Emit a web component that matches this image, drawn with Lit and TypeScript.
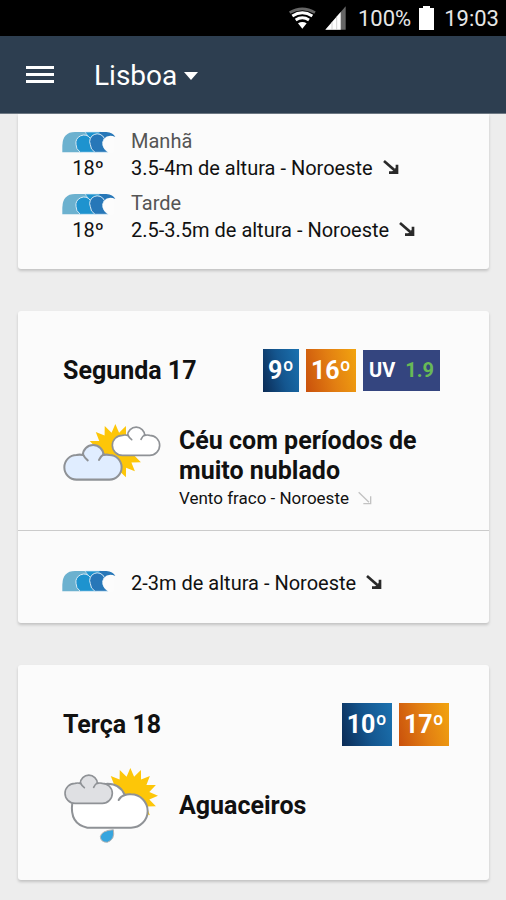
import { LitElement, html, css, svg, nothing } from "lit";
import { customElement, property } from "lit/decorators.js";

const CLOUD =
  "M30 82 H112 A30 30 0 0 0 112 22 Q105 20 97 22 A25 24 0 0 0 46 22 Q38 20 30 22 A30 30 0 0 0 30 82 Z";
const CLOUD_FOLDS = "M46 20 Q50 29 58 35 M98 20 Q90 25 86 34";

/** Sixteen-pointed sun outline around (cx, cy). */
function sunPoints(cx: number, cy: number): string {
  const points: string[] = [];
  for (let i = 0; i < 32; i++) {
    const radius = i % 2 ? 58 : 83;
    const angle = (i * Math.PI) / 16 - Math.PI / 2;
    points.push(
      `${(cx + radius * Math.cos(angle)).toFixed(1)},${(cy + radius * Math.sin(angle)).toFixed(1)}`
    );
  }
  return points.join(" ");
}

const cloud = (transform: string, fill: string) => svg`
  <g transform=${transform} stroke="#8f9296" stroke-width="5" stroke-linecap="round">
    <path d=${CLOUD} fill=${fill}></path>
    <path d=${CLOUD_FOLDS} fill="none"></path>
  </g>`;

@customElement("weather-icon")
export class WeatherIcon extends LitElement {
  @property() kind = "";

  static styles = css`
    :host {
      display: block;
    }
    .icon {
      display: block;
    }
  `;

  render() {
    if (this.kind === "showers") {
      return html`<svg class="icon" width="98" height="76" viewBox="39 24 294 228" role="img" aria-label="Aguaceiros">
        <polygon points=${sunPoints(241, 107)} fill="#fdc608"></polygon>
        <path
          d="M112 203 H243 A50 50 0 0 0 243 103 Q233 102 224 105 Q211 71 172 71 L100 90 L67 128 Q58 192 112 203 Z"
          fill="#fff" stroke="#8f9296" stroke-width="6"></path>
        <path d="M226 104 Q212 108 206 120" fill="none" stroke="#8f9296" stroke-width="6" stroke-linecap="round"></path>
        ${cloud("translate(45 48)", "#dfe0e3")}
        <path d="M190 209 Q196 238 172 247 Q152 247 151 230 Q154 212 190 209 Z" fill="#37a5de" stroke="#b5b5b5" stroke-width="3"></path>
      </svg>`;
    }
    return html`<svg class="icon" width="98" height="58" viewBox="-1 0 294 174" role="img" aria-label="Céu com períodos de muito nublado">
      <polygon points=${sunPoints(156, 83)} fill="#fdc608"></polygon>
      ${cloud("translate(147 12)", "#fff")}
      ${cloud("translate(3 66) scale(1.21 1.23)", "#e0edff")}
    </svg>`;
  }
}

@customElement("wave-icon")
export class WaveIcon extends LitElement {
  static styles = css`
    :host {
      display: block;
    }
    .icon {
      display: block;
    }
  `;

  render() {
    return html`<svg class="icon" width="56" height="22" viewBox="-3 0 168 66" aria-hidden="true">
      <path d="M4 64 V44 Q5 3 42 3 H78 L92 22 L64 64 Z" fill="#6cb1cf"></path>
      <path d="M72 3 H120 L130 22 H86 Z" fill="#1e93cf" stroke="#d5e8f4" stroke-width="2"></path>
      <path d="M58 64 Q44 54 45 40 A24 23 0 0 1 88 22 L108 20 L106 64 Z" fill="#1e93cf" stroke="#d5e8f4" stroke-width="3"></path>
      <path d="M114 3 H136 Q156 4 163 18 Q142 8 128 24 Z" fill="#2777b8"></path>
      <path d="M102 64 Q88 55 88 41 A23 23 0 0 1 130 22 Q116 44 141 64 Z" fill="#2777b8" stroke="#d5e8f4" stroke-width="3"></path>
      <path d="M144 65 Q122 52 126 34 Q135 15 158 18 V65 Z" fill="#fcfcfc"></path>
    </svg>`;
  }
}

@customElement("wind-arrow")
export class WindArrow extends LitElement {
  @property({ type: Boolean }) light = false;

  static styles = css`
    :host {
      display: inline-block;
    }
    .icon {
      display: block;
    }
  `;

  render() {
    return html`<svg class="icon" width="16" height="16" viewBox="0 0 48 48" fill="none" aria-hidden="true">
      ${this.light
        ? svg`<path d="M5 4 L36 34 M19 38 H41 V16" stroke="#c2c2c2" stroke-width="4"></path>`
        : svg`<path d="M3 3 L34 30" stroke="#2a2a2a" stroke-width="8"></path>
            <path d="M18 38 H42 V14" stroke="#2a2a2a" stroke-width="8"></path>
            <path d="M24 38 L42 20 V38 Z" fill="#2a2a2a"></path>`}
    </svg>`;
  }
}

interface Swell {
  period?: string;
  water?: string;
  text: string;
}

interface Day {
  title?: string;
  min?: string;
  max?: string;
  uv?: string;
  kind?: string;
  summary?: string;
  wind?: string;
  swells: Swell[];
}

const DAYS: Day[] = [
  {
    swells: [
      { period: "Manhã", water: "18º", text: "3.5-4m de altura - Noroeste" },
      { period: "Tarde", water: "18º", text: "2.5-3.5m de altura - Noroeste" },
    ],
  },
  {
    title: "Segunda 17",
    min: "9º",
    max: "16º",
    uv: "1.9",
    kind: "cloudy",
    summary: "Céu com períodos de muito nublado",
    wind: "Vento fraco - Noroeste",
    swells: [{ text: "2-3m de altura - Noroeste" }],
  },
  {
    title: "Terça 18",
    min: "10º",
    max: "17º",
    kind: "showers",
    summary: "Aguaceiros",
    swells: [],
  },
];

@customElement("app-root")
export class AppRoot extends LitElement {
  static styles = css`
    :host {
      display: block;
      min-height: 100vh;
      background: #ededed;
      color: #111;
      font-family: Roboto, "Liberation Sans", sans-serif;
      font-size: 20px;
    }
    .status {
      display: flex;
      align-items: center;
      justify-content: flex-end;
      height: 36px;
      padding-right: 7px;
      background: #000;
      color: #e6e6e6;
      font-size: 22px;
    }
    .wifi {
      margin-right: 9px;
    }
    .signal {
      margin-right: 12px;
    }
    .battery {
      margin: 0 10px 0 8px;
    }
    .bar {
      display: flex;
      align-items: center;
      gap: 36px;
      height: 78px;
      padding: 0 22px;
      box-sizing: border-box;
      background: #2d3e50;
      border-bottom: 1px solid #6d7883;
    }
    .menu {
      display: block;
      padding: 4px;
      border: 0;
      background: none;
    }
    .menu svg,
    .caret {
      display: block;
    }
    .city {
      display: flex;
      align-items: center;
      gap: 6px;
      padding-top: 3px;
    }
    .city-select {
      appearance: none;
      padding: 0;
      border: 0;
      background: none;
      color: #fff;
      font: 28px/36px Roboto, "Liberation Sans", sans-serif;
    }
    .list {
      display: flex;
      flex-direction: column;
      gap: 42px;
      padding: 0 17px 20px 18px;
    }
    .card {
      background: #fbfbfb;
      border-radius: 3px;
      box-shadow: 0 2px 3px rgba(0, 0, 0, 0.18);
    }
    .card:first-child {
      border-radius: 0 0 3px 3px;
    }
    .forecast {
      padding: 38px 40px 20px 45px;
    }
    .head {
      display: flex;
      align-items: center;
      justify-content: space-between;
      height: 43px;
    }
    .title,
    .summary {
      margin: 0;
      font-size: 25px;
      line-height: 30px;
      font-weight: 700;
    }
    .badges {
      display: flex;
      align-items: center;
      gap: 7px;
    }
    .temp {
      padding: 0 5px;
      color: #fff;
      font-size: 25px;
      line-height: 43px;
      font-weight: 700;
    }
    .min {
      background: linear-gradient(75deg, #0b2b55, #14568f 50%, #1b72b0);
    }
    .max {
      background: linear-gradient(75deg, #c9500c, #e27e12 50%, #f2a40f);
    }
    .uv {
      display: flex;
      gap: 10px;
      margin-right: 9px;
      padding: 0 6px;
      background: #34457f;
      color: #fff;
      font-size: 20px;
      line-height: 41px;
      font-weight: 700;
    }
    .uv-value {
      color: #68b956;
    }
    .sky {
      display: grid;
      grid-template-columns: 98px 1fr;
      column-gap: 18px;
      align-items: center;
      margin-top: 22px;
    }
    .sky.windy {
      align-items: start;
      margin-top: 32px;
    }
    .windy .words {
      padding-top: 2px;
    }
    .wind {
      margin: 0;
      font-size: 17px;
      line-height: 24px;
    }
    .wind wind-arrow {
      margin-left: 4px;
      vertical-align: -3px;
    }
    .forecast.short {
      padding-bottom: 36px;
    }
    .sea {
      display: flex;
      flex-direction: column;
      gap: 8px;
      padding: 39px 42px 26px;
      border-top: 1px solid #cbcbcb;
    }
    .sea.periods {
      padding: 14px 42px 25px;
      border-top: 0;
    }
    .swell {
      display: grid;
      grid-template-columns: 56px 1fr;
      column-gap: 15px;
      line-height: 27px;
    }
    .periods wave-icon {
      align-self: center;
    }
    .period {
      color: #555;
    }
    .water {
      text-align: center;
    }
    .height wind-arrow {
      margin-left: 10px;
      vertical-align: -1px;
    }
  `;

  private renderSwell(s: Swell) {
    return html`<div class="swell">
      <wave-icon></wave-icon>
      ${s.period ? html`<span class="period">${s.period}</span><span class="water">${s.water}</span>` : nothing}
      <span class="height">${s.text}<wind-arrow></wind-arrow></span>
    </div>`;
  }

  private renderDay(d: Day) {
    return html`<article class="card">
      ${d.title
        ? html`<section class="forecast ${d.wind ? "" : "short"}">
            <div class="head">
              <h2 class="title">${d.title}</h2>
              <div class="badges">
                <span class="temp min">${d.min}</span>
                <span class="temp max">${d.max}</span>
                ${d.uv ? html`<span class="uv"><span>UV</span><span class="uv-value">${d.uv}</span></span>` : nothing}
              </div>
            </div>
            <div class="sky ${d.wind ? "windy" : ""}">
              <weather-icon kind=${d.kind ?? ""}></weather-icon>
              <div class="words">
                <p class="summary">${d.summary}</p>
                ${d.wind ? html`<p class="wind">${d.wind} <wind-arrow light></wind-arrow></p>` : nothing}
              </div>
            </div>
          </section>`
        : nothing}
      ${d.swells.length
        ? html`<section class="sea ${d.title ? "" : "periods"}">${d.swells.map((s) => this.renderSwell(s))}</section>`
        : nothing}
    </article>`;
  }

  render() {
    return html`
      <div class="status">
        <svg class="wifi" width="28" height="22" viewBox="102 20 84 66" fill="none" aria-hidden="true">
          <path d="M107 37 Q145 14 183 37" stroke="#666" stroke-width="8"></path>
          <path d="M115 47 Q145 28 175 47" stroke="#fff" stroke-width="9"></path>
          <path d="M125 59 Q145 46 165 59" stroke="#fff" stroke-width="9"></path>
          <path d="M132 69 Q145 61 158 69 L145 85 Z" fill="#fff"></path>
        </svg>
        <svg class="signal" width="21" height="24" viewBox="211 15 63 72" aria-hidden="true">
          <path d="M212 86 L273 16 V86 Z" fill="#666"></path>
          <path d="M212 86 L258 33 V86 Z" fill="#fff"></path>
          <path d="M232 63 V86 M246 47 V86" stroke="#bbb" stroke-width="2"></path>
        </svg>
        <span>100%</span>
        <svg class="battery" width="15" height="24" viewBox="0 0 15 24" aria-hidden="true">
          <path d="M0 2 H4 V0 H11 V2 H15 V24 H0 Z" fill="#fff"></path>
        </svg>
        <span>19:03</span>
      </div>
      <header class="bar">
        <button class="menu" type="button" aria-label="Menu">
          <svg width="28" height="20" viewBox="0 0 28 20" aria-hidden="true">
            <path d="M0 1 H28 V4 H0 Z M0 8 H28 V11 H0 Z M0 15 H28 V18 H0 Z" fill="#fff"></path>
          </svg>
        </button>
        <label class="city">
          <select class="city-select" aria-label="Cidade">
            <option>Lisboa</option>
          </select>
          <svg class="caret" width="14" height="8" viewBox="0 0 14 8" aria-hidden="true">
            <path d="M0 0 H14 L7 8 Z" fill="#fff"></path>
          </svg>
        </label>
      </header>
      <main class="list">${DAYS.map((d) => this.renderDay(d))}</main>
    `;
  }
}
